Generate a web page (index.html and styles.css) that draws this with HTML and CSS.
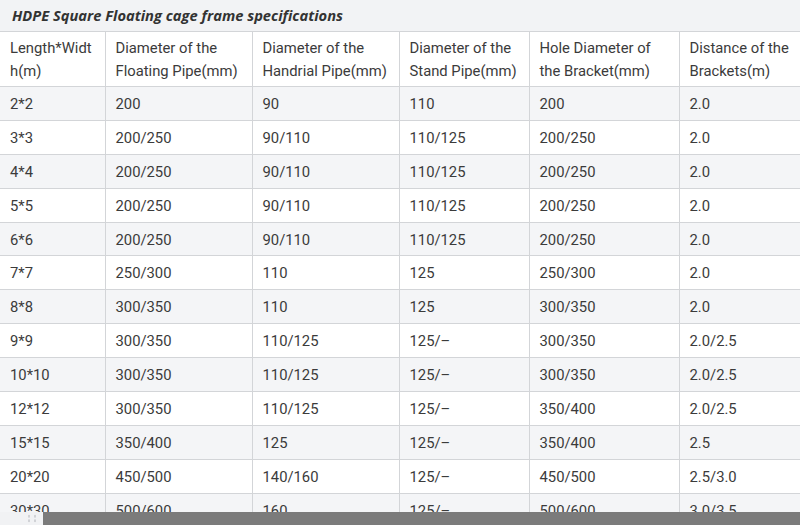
FILE: index.html
```html
<!DOCTYPE html>
<html>
<head>
<meta charset="utf-8">
<link rel="stylesheet" href="styles.css">
</head>
<body>
<div class="page">
  <div class="title">HDPE Square Floating cage frame specifications</div>
  <table class="spec">
    <colgroup>
      <col class="c1"><col class="c2"><col class="c3"><col class="c4"><col class="c5"><col class="c6">
    </colgroup>
    <thead>
      <tr><th>Length*Widt h(m)</th><th>Diameter of the Floating Pipe(mm)</th><th>Diameter of the Handrial Pipe(mm)</th><th>Diameter of the Stand Pipe(mm)</th><th>Hole Diameter of the Bracket(mm)</th><th>Distance of the Brackets(m)</th></tr>
    </thead>
    <tbody>
      <tr><td>2*2</td><td>200</td><td>90</td><td>110</td><td>200</td><td>2.0</td></tr>
      <tr><td>3*3</td><td>200/250</td><td>90/110</td><td>110/125</td><td>200/250</td><td>2.0</td></tr>
      <tr><td>4*4</td><td>200/250</td><td>90/110</td><td>110/125</td><td>200/250</td><td>2.0</td></tr>
      <tr><td>5*5</td><td>200/250</td><td>90/110</td><td>110/125</td><td>200/250</td><td>2.0</td></tr>
      <tr><td>6*6</td><td>200/250</td><td>90/110</td><td>110/125</td><td>200/250</td><td>2.0</td></tr>
      <tr><td>7*7</td><td>250/300</td><td>110</td><td>125</td><td>250/300</td><td>2.0</td></tr>
      <tr><td>8*8</td><td>300/350</td><td>110</td><td>125</td><td>300/350</td><td>2.0</td></tr>
      <tr><td>9*9</td><td>300/350</td><td>110/125</td><td>125/–</td><td>300/350</td><td>2.0/2.5</td></tr>
      <tr><td>10*10</td><td>300/350</td><td>110/125</td><td>125/–</td><td>300/350</td><td>2.0/2.5</td></tr>
      <tr><td>12*12</td><td>300/350</td><td>110/125</td><td>125/–</td><td>350/400</td><td>2.0/2.5</td></tr>
      <tr><td>15*15</td><td>350/400</td><td>125</td><td>125/–</td><td>350/400</td><td>2.5</td></tr>
      <tr><td>20*20</td><td>450/500</td><td>140/160</td><td>125/–</td><td>450/500</td><td>2.5/3.0</td></tr>
      <tr><td>30*30</td><td>500/600</td><td>160</td><td>125/–</td><td>500/600</td><td>3.0/3.5</td></tr>
    </tbody>
  </table>
</div>
<div class="hscroll"><div class="hs-btn"><div class="hs-dots"></div></div><div class="hs-thumb"></div></div>
</body>
</html>
```
FILE: styles.css
```css
html, body {
  margin: 0;
  padding: 0;
  background: #ffffff;
  overflow: hidden;
}
.page {
  width: 840px;
  font-family: Roboto, "Liberation Sans", sans-serif;
  color: #3b3b3b;
}
.title {
  height: 31px;
  box-sizing: border-box;
  padding: 5px 0 0 12px;
  background: #f2f3f5;
  font-family: "Open Sans", "Liberation Sans", sans-serif;
  font-weight: 700;
  font-style: italic;
  font-size: 14.7px;
  line-height: 20px;
  color: #333333;
}
.spec {
  table-layout: fixed;
  border-collapse: collapse;
  width: 840px;
  font-size: 14.8px;
}
.c1 { width: 105px; }
.c2 { width: 147px; }
.c3 { width: 147px; }
.c4 { width: 130px; }
.c5 { width: 150px; }
.c6 { width: 161px; }
.spec th, .spec td {
  border: 1px solid #d3d5d8;
  text-align: left;
  vertical-align: middle;
  padding: 0 6px 0 10px;
  font-weight: 400;
}
.spec tr > :first-child { border-left: none; }
.spec th {
  height: 55px;
  line-height: 23px;
  padding-top: 5px;
  padding-bottom: 3px;
  box-sizing: border-box;
  background: #ffffff;
}
.spec td {
  height: 33.9px;
  line-height: 20px;
  padding-top: 1px;
  box-sizing: border-box;
  white-space: nowrap;
}
.spec tbody tr:nth-child(odd) td { background: #f4f5f7; }
.spec tbody tr:nth-child(even) td { background: #ffffff; }
.hscroll {
  position: fixed;
  left: 0;
  right: 0;
  bottom: 0;
  height: 13px;
  display: flex;
}
.hs-btn {
  width: 43px;
  background: #f1f2f4;
  display: flex;
  align-items: center;
  padding-left: 26px;
  box-sizing: border-box;
}
.hs-dots {
  width: 12px;
  height: 9px;
  background-image: radial-gradient(circle, #cfd1d5 1px, transparent 1.3px);
  background-size: 6px 4.5px;
}
.hs-thumb {
  flex: 1;
  background: #7b7b7b;
}
```
